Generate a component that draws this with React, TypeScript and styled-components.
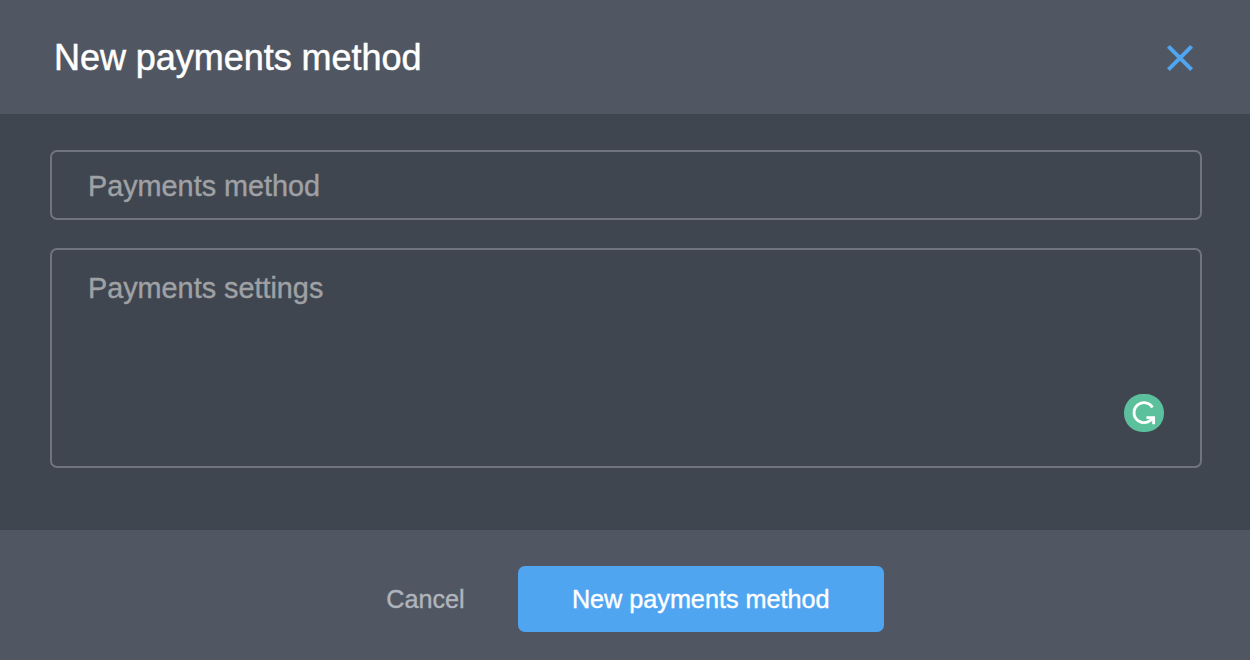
import React from 'react';
import styled, { createGlobalStyle, css } from 'styled-components';

const GlobalStyle = createGlobalStyle`
  *, *::before, *::after { box-sizing: border-box; }
  body {
    margin: 0;
    background: #404650;
    font-family: "Liberation Sans", Helvetica, Arial, sans-serif;
  }
`;

const Dialog = styled.section`
  display: flex;
  flex-direction: column;
  width: 100%;
  height: 660px;
  overflow: hidden;
  background: #404650;
`;

const Header = styled.header`
  display: flex;
  flex: 0 0 114px;
  align-items: center;
  justify-content: space-between;
  padding: 0 56px 0 54px;
  background: #515762;
`;

const Title = styled.h1`
  margin: 0;
  padding-top: 2px;
  color: #fff;
  font-size: 36px;
  font-weight: 400;
  letter-spacing: -0.04px;
  line-height: 42px;
  -webkit-text-stroke: 0.5px #fff;
`;

const CloseButton = styled.button`
  display: flex;
  margin: 2px 0 0;
  padding: 0;
  border: 0;
  background: none;
  color: #50a5f1;
`;

const Body = styled.div`
  display: flex;
  flex: 1;
  flex-direction: column;
  gap: 28px;
  padding: 36px 48px 0 50px;
`;

const fieldStyle = css`
  display: block;
  width: 100%;
  margin: 0;
  border: 2px solid #70747c;
  border-radius: 7px;
  outline: 0;
  background: transparent;
  color: #fff;
  font-family: inherit;
  font-size: 28.8px;
  line-height: 34px;

  &::placeholder {
    color: #9fa1a5;
    opacity: 1;
    -webkit-text-stroke: 0.4px #9fa1a5;
  }
`;

const TextField = styled.input`
  ${fieldStyle}
  height: 70px;
  padding: 2px 36px 0;
`;

const AreaWrap = styled.div`
  position: relative;
  height: 220px;
`;

const TextArea = styled.textarea`
  ${fieldStyle}
  height: 100%;
  padding: 21px 36px;
  resize: none;
`;

const WritingBadge = styled.span`
  position: absolute;
  right: 38px;
  bottom: 36px;
  display: flex;
  width: 40px;
  height: 38px;
  border-radius: 18.5px;
  background: #5bc09c;
`;

const Footer = styled.footer`
  display: flex;
  flex: 0 0 130px;
  align-items: center;
  justify-content: center;
  gap: 53px;
  padding: 8px 0 0 20px;
  background: #515762;
`;

const Button = styled.button<{ $primary?: boolean }>`
  width: ${({ $primary }) => ($primary ? '366px' : 'auto')};
  height: 66px;
  padding: 0;
  border: 0;
  border-radius: 7px;
  background: ${({ $primary }) => ($primary ? '#50a5f1' : 'none')};
  color: ${({ $primary }) => ($primary ? '#fff' : '#b0b4bd')};
  font-family: inherit;
  font-size: 25.2px;
  line-height: 30px;
  -webkit-text-stroke: 0.4px currentColor;
`;

export default function App() {
  return (
    <>
      <GlobalStyle />
      <Dialog role="dialog" aria-labelledby="dialog-title">
        <Header>
          <Title id="dialog-title">New payments method</Title>
          <CloseButton aria-label="Close">
            <svg width="28" height="28" viewBox="0 0 28 28" fill="none" stroke="currentColor" strokeWidth="4">
              <path d="M2.4 2.4 25.6 25.6M25.6 2.4 2.4 25.6" />
            </svg>
          </CloseButton>
        </Header>
        <Body>
          <TextField placeholder="Payments method" />
          <AreaWrap>
            <TextArea placeholder="Payments settings" spellCheck={false} />
            <WritingBadge>
              <svg width="40" height="38" viewBox="0 0 40 38" fill="none" stroke="#fff" strokeWidth="2.8">
                <path d="M28.5 13.4A10 10 0 1 0 26.4 26.4L29.4 23.6" />
                <path d="M22.5 23.6H29.6V30.2" />
              </svg>
            </WritingBadge>
          </AreaWrap>
        </Body>
        <Footer>
          <Button>Cancel</Button>
          <Button $primary>New payments method</Button>
        </Footer>
      </Dialog>
    </>
  );
}
